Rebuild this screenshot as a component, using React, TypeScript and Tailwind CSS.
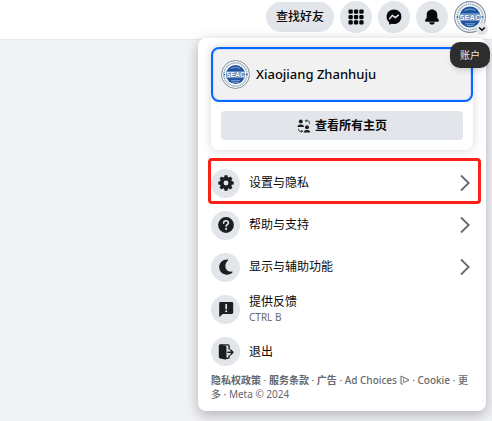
import type { ReactNode } from 'react';

type MenuItem = {
  label: string;
  hint?: string;
  icon: ReactNode;
  hasArrow?: boolean;
  highlighted?: boolean;
  height: string;
};

const Avatar = ({ className }: { className: string }) => (
  <svg viewBox="0 0 32 32" className={className} aria-hidden="true">
    <circle cx="16" cy="16" r="15.4" fill="#fff" stroke="#7f8e9b" strokeWidth="1.1" />
    <circle cx="16" cy="16" r="12.8" fill="none" stroke="#9fb0bd" strokeWidth="1.8" strokeDasharray="1.7 0.6" />
    <circle cx="16" cy="16" r="10.6" fill="#1f559f" />
    <path d="M10.500 9.300q5.500-2.600 11 0M11 22.800h10M12.500 24.600h7" stroke="#9dbade" strokeWidth="0.8" fill="none" />
    <path d="M2.800 16h1.500M27.700 16h1.500" stroke="#24589e" strokeWidth="1.600" />
    <rect x="6" y="12.400" width="20" height="7.600" fill="#7da1cd" />
    <text
      x="16"
      y="19"
      textAnchor="middle"
      fontSize="7.5"
      fontWeight="700"
      fontFamily="Liberation Sans, sans-serif"
      fill="#fff"
      stroke="#1f4f92"
      strokeWidth="0.5"
      paintOrder="stroke"
    >
      SEAC
    </text>
  </svg>
);

const GridIcon = () => (
  <svg viewBox="0 0 16 16" className="size-4" fill="#080809">
    {[0.5, 5.9, 11.3].map((y) =>
      [0.5, 5.9, 11.3].map((x) => <rect key={`${x}-${y}`} x={x} y={y} width="4.3" height="4.3" rx="1.1" />)
    )}
  </svg>
);

const MessengerIcon = () => (
  <svg viewBox="0 0 16 16" className="size-4">
    <path d="M8 .6C3.7.6.6 3.700.6 7.700c0 2.200.9 4 2.300 5.300.2.200.2.400.2.600v1.300c0 .5.5.8.9.6l1.600-.7c.2-.1.300-.1.500 0 .6.200 1.200.2 1.900.2 4.300 0 7.400-3.200 7.400-7.300S12.300.6 8 .6z" fill="#080809" />
    <path d="M3.600 9.700l2.700-3.300 3 2.300 3.100-2.500" fill="none" stroke="#e2e5e9" strokeWidth="1.500" strokeLinecap="round" strokeLinejoin="round" />
  </svg>
);

const BellIcon = () => (
  <svg viewBox="0 0 16 16" className="size-4" fill="#080809">
    <path d="M8 .5c-3.100 0-5.300 2.300-5.300 5.200v2.500c0 .6-.2 1-.6 1.500l-.8 1.100c-.7 1 0 2 1 2h11.400c1 0 1.700-1 1-2l-.8-1.100c-.4-.5-.6-.9-.6-1.500V5.700C13.300 2.800 11.100.5 8 .5z" />
    <path d="M5.200 13.300h5.600c-.2 1.400-1.300 2.300-2.800 2.300s-2.600-.9-2.800-2.300z" />
  </svg>
);

const SwitchProfilesIcon = () => (
  <svg viewBox="0 0 14 14" className="size-3.5" fill="#1c1e21">
    <circle cx="3.800" cy="2.600" r="2" />
    <path d="M.5 8c0-1.700 1.200-2.600 2.600-2.600h1.300C5.800 5.400 7 6.300 7 8z" />
    <circle cx="10" cy="8.300" r="2" />
    <path d="M6.700 13.600c0-1.700 1.200-2.600 2.600-2.600h1.300c1.400 0 2.700.9 2.700 2.600z" />
    <path d="M8.500 1.800h2.300c1 0 1.600.6 1.600 1.600v1.400M9.700.5L8.400 1.800l1.300 1.300M5.500 12.300H3.200c-1 0-1.600-.6-1.600-1.600v-.9M4.300 11l1.300 1.300-1.300 1.300" fill="none" stroke="#1c1e21" strokeWidth="0.900" />
  </svg>
);

const GearIcon = () => (
  <svg viewBox="0 0 16 16" className="size-4" fill="#1c1e21">
    <g>
      {[0, 45, 90, 135, 180, 225, 270, 315].map((angle) => (
        <path key={angle} d="M5.900 3.600L6.500.3h3l.6 3.300z" transform={`rotate(${angle} 8 8)`} />
      ))}
    </g>
    <circle cx="8" cy="8" r="4.300" fill="none" stroke="#1c1e21" strokeWidth="3.700" />
  </svg>
);

const HelpIcon = () => (
  <svg viewBox="0 0 16 16" className="size-4">
    <circle cx="8" cy="8" r="7.900" fill="#1c1e21" />
    <path d="M5.600 6.100c0-1.400 1-2.300 2.400-2.300s2.400.9 2.400 2.100c0 1.600-2.300 1.700-2.300 3.300" fill="none" stroke="#e2e5e9" strokeWidth="1.600" strokeLinecap="round" />
    <circle cx="8.100" cy="11.900" r="1.050" fill="#e2e5e9" />
  </svg>
);

const MoonIcon = () => (
  <svg viewBox="0 0 16 16" className="size-4" fill="#1c1e21">
    <path d="M9.200.4C4.600.4 1.200 3.700 1.200 8.100c0 4.500 3.400 7.600 7.700 7.600 2.300 0 4.200-.8 5.500-2.200.4-.5.100-1-.5-.9-4.100.4-6.500-2-6.500-5.600 0-2.300.9-4.100 2.500-5.500.5-.5.200-1.100-.7-1.100z" />
  </svg>
);

const FeedbackIcon = () => (
  <svg viewBox="0 0 16 16" className="size-4">
    <path d="M2.500 1h11.300c.8 0 1.400.6 1.400 1.400v9.200c0 .8-.6 1.400-1.400 1.400H4.700l-2.600 2.500c-.4.400-.9.200-.9-.4V2.400C1.200 1.600 1.700 1 2.500 1z" fill="#1c1e21" />
    <path d="M8.200 3.500v4" stroke="#e2e5e9" strokeWidth="1.700" strokeLinecap="round" />
    <circle cx="8.200" cy="10.200" r="1.050" fill="#e2e5e9" />
  </svg>
);

const LogoutIcon = () => (
  <svg viewBox="0 0 16 16" className="size-4">
    <path d="M.8 2C.8 1 1.300.5 2.200.5l4.800.9c.9.200 1.500.8 1.500 1.700v11.300c0 .9-.7 1.300-1.500 1.100l-4.800-1c-.9-.2-1.400-.8-1.400-1.700z" fill="#1c1e21" />
    <path d="M2.500.900h7.300c.8 0 1.300.5 1.300 1.300v3M11.100 11.500v1.400c0 .8-.5 1.300-1.300 1.300H7.500M9.800 8.300h5M12.700 5.900l2.300 2.400-2.300 2.400" fill="none" stroke="#1c1e21" strokeWidth="1.400" strokeLinecap="round" strokeLinejoin="round" />
  </svg>
);

const ChevronIcon = () => (
  <svg viewBox="0 0 10 18" className="h-[18px] w-2.5 shrink-0" fill="none" stroke="#65686c" strokeWidth="1.800">
    <path d="M1 1.500L8.700 9 1 16.500" />
  </svg>
);

const AdChoicesIcon = () => (
  <svg viewBox="0 0 10 10" className="inline-block size-2.5 align-[-1px]" fill="none" stroke="#65686c" strokeWidth="1">
    <path d="M3 9H1V1l8 4-4.500 2.300M3.700 4.600v3.200M3.700 2.900v.8" />
  </svg>
);

const menuItems: MenuItem[] = [
  { label: '设置与隐私', icon: <GearIcon />, hasArrow: true, highlighted: true, height: 'h-[42px]' },
  { label: '帮助与支持', icon: <HelpIcon />, hasArrow: true, height: 'h-[42px]' },
  { label: '显示与辅助功能', icon: <MoonIcon />, hasArrow: true, height: 'h-[42px]' },
  { label: '提供反馈', hint: 'CTRL B', icon: <FeedbackIcon />, height: 'h-[42px]' },
  { label: '退出', icon: <LogoutIcon />, height: 'h-[43px]' },
];

const roundButton = 'flex size-8 items-center justify-center rounded-full bg-[#e2e5e9]';

const Header = () => (
  <header className="flex h-10 items-start justify-end border-b border-[#e6e7eb] bg-white pt-px pr-1.5">
    <nav className="flex items-center gap-1.5">
      <button type="button" className="h-[30px] rounded-full bg-[#e2e5e9] px-2.5 text-[12px] font-medium text-[#080809]">
        查找好友
      </button>
      <button type="button" aria-label="菜单" className={roundButton}>
        <GridIcon />
      </button>
      <button type="button" aria-label="Messenger" className={roundButton}>
        <MessengerIcon />
      </button>
      <button type="button" aria-label="通知" className={roundButton}>
        <BellIcon />
      </button>
      <button type="button" aria-label="账户" className="relative size-8 rounded-full">
        <Avatar className="size-8" />
        {/* Small arrow badge over the avatar */}
        <span className="absolute -right-0.5 -bottom-0.5 flex size-3 items-center justify-center rounded-full bg-[#e2e5e9]">
          <svg viewBox="0 0 8 8" className="size-2" fill="none" stroke="#080809" strokeWidth="1.500">
            <path d="M1.200 2.500L4 5.300l2.800-2.800" />
          </svg>
        </span>
      </button>
    </nav>
  </header>
);

const ProfileCard = () => (
  <section className="rounded-lg bg-white pb-2.5 shadow-[0_0_10px_rgba(0,0,0,0.17)]">
    <a
      href="#profile"
      className="flex h-[55px] items-center gap-1.5 rounded-lg border-2 border-[#0866ff] bg-[#f1f1f1] px-2 text-[13px] font-medium text-[#080809] inset-ring inset-ring-[#cfe0fb]"
    >
      <Avatar className="size-[29px]" />
      Xiaojiang Zhanhuju
    </a>
    <div className="px-2.5 pt-[9px]">
      <button
        type="button"
        className="flex h-[29px] w-full items-center justify-center gap-1 rounded bg-[#e2e5e9] text-[12px] font-semibold text-[#080809]"
      >
        <SwitchProfilesIcon />
        查看所有主页
      </button>
    </div>
  </section>
);

const MenuRow = ({ item }: { item: MenuItem }) => (
  <li className="relative">
    <button type="button" className={`flex w-full items-center gap-[9px] pr-[3px] text-left text-[#080809] ${item.height}`}>
      <span className="flex size-[29px] shrink-0 items-center justify-center rounded-full bg-[#e2e5e9]">{item.icon}</span>
      <span className="flex-1 text-[12px] leading-4">
        {item.label}
        {item.hint && <span className="block text-[10px] leading-[14px] text-[#65686c]">{item.hint}</span>}
      </span>
      {item.hasArrow && <ChevronIcon />}
    </button>
    {item.highlighted && (
      <span className="pointer-events-none absolute -top-1 -right-2 bottom-0 -left-[3px] rounded-sm border-[3px] border-[#fb2117]" />
    )}
  </li>
);

const AccountMenu = () => (
  <div className="absolute top-[38px] right-1.5 w-72 rounded-lg bg-white px-[13px] pt-[9px] pb-2.5 shadow-[0_4px_14px_rgba(0,0,0,0.28)]">
    <ProfileCard />
    <ul className="pt-3">
      {menuItems.map((item) => (
        <MenuRow key={item.label} item={item} />
      ))}
    </ul>
    <footer className="text-[10px] leading-[14px] text-[#65686c]">
      <a href="#privacy" className="font-semibold">隐私权政策</a> · <a href="#terms" className="font-semibold">服务条款</a> ·{' '}
      <a href="#ads" className="font-semibold">广告</a> ·{' '}
      <a href="#adchoices" className="font-medium">
        Ad Choices <AdChoicesIcon />
      </a>{' '}
      · <a href="#cookie" className="font-medium">Cookie</a> · <a href="#more" className="font-medium">更多</a> · Meta © 2024
    </footer>
  </div>
);

const App = () => {
  return (
    <div
      lang="zh-CN"
      className="relative min-h-screen overflow-hidden bg-[#f2f3f7] font-['Noto_Sans','Noto_Sans_CJK_SC',sans-serif]"
    >
      <Header />
      <AccountMenu />
      <div
        role="tooltip"
        className="absolute top-[42px] right-0.5 flex h-[26px] w-10 items-center justify-center rounded-[10px] bg-[#2d2d2e] text-[10px] text-[#e8e8e8] shadow-md"
      >
        账户
      </div>
    </div>
  );
};

export default App;
